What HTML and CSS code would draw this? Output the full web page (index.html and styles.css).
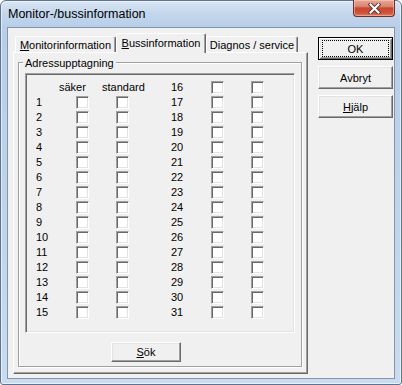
FILE: index.html
```html
<!DOCTYPE html>
<html lang="sv">

<head>
    <meta charset="UTF-8">
    <title>Monitor-/bussinformation</title>
    <link rel="stylesheet" href="styles.css">
</head>

<body>
    <div class="window">
        <div class="titlebar">
            <span class="title">Monitor-/bussinformation</span>
            <div class="close">
                <svg width="13" height="11" viewBox="0 0 13 11">
                    <path d="M2.5 1.5 L10.5 9.5 M10.5 1.5 L2.5 9.5" stroke="#5b3b36" stroke-width="4" stroke-linecap="square" fill="none"/>
                    <path d="M2.5 1.5 L10.5 9.5 M10.5 1.5 L2.5 9.5" stroke="#fff" stroke-width="2" stroke-linecap="square" fill="none"/>
                </svg>
            </div>
        </div>
        <div class="client">
            <div class="tabctl">
                <div class="tabstrip">
                    <div class="tab t1"><u>M</u>onitorinformation</div>
                    <div class="tab t2 active"><u>B</u>ussinformation</div>
                    <div class="tab t3">Diagnos / service</div>
                </div>
                <div class="panel">
                    <fieldset class="group">
                        <legend>Adressupptagning</legend>
                        <div class="sunken">
                            <div class="grid">
                                <span></span><span>säker</span><span>standard</span><span>16</span><span class="cb"></span><span class="cb"></span>
                                <span>1</span><span class="cb a"></span><span class="cb b"></span><span>17</span><span class="cb"></span><span class="cb"></span>
                                <span>2</span><span class="cb a"></span><span class="cb b"></span><span>18</span><span class="cb"></span><span class="cb"></span>
                                <span>3</span><span class="cb a"></span><span class="cb b"></span><span>19</span><span class="cb"></span><span class="cb"></span>
                                <span>4</span><span class="cb a"></span><span class="cb b"></span><span>20</span><span class="cb"></span><span class="cb"></span>
                                <span>5</span><span class="cb a"></span><span class="cb b"></span><span>21</span><span class="cb"></span><span class="cb"></span>
                                <span>6</span><span class="cb a"></span><span class="cb b"></span><span>22</span><span class="cb"></span><span class="cb"></span>
                                <span>7</span><span class="cb a"></span><span class="cb b"></span><span>23</span><span class="cb"></span><span class="cb"></span>
                                <span>8</span><span class="cb a"></span><span class="cb b"></span><span>24</span><span class="cb"></span><span class="cb"></span>
                                <span>9</span><span class="cb a"></span><span class="cb b"></span><span>25</span><span class="cb"></span><span class="cb"></span>
                                <span>10</span><span class="cb a"></span><span class="cb b"></span><span>26</span><span class="cb"></span><span class="cb"></span>
                                <span>11</span><span class="cb a"></span><span class="cb b"></span><span>27</span><span class="cb"></span><span class="cb"></span>
                                <span>12</span><span class="cb a"></span><span class="cb b"></span><span>28</span><span class="cb"></span><span class="cb"></span>
                                <span>13</span><span class="cb a"></span><span class="cb b"></span><span>29</span><span class="cb"></span><span class="cb"></span>
                                <span>14</span><span class="cb a"></span><span class="cb b"></span><span>30</span><span class="cb"></span><span class="cb"></span>
                                <span>15</span><span class="cb a"></span><span class="cb b"></span><span>31</span><span class="cb"></span><span class="cb"></span>
                            </div>
                        </div>
                        <div class="btn sok"><u>S</u>ök</div>
                    </fieldset>
                </div>
            </div>
            <div class="side">
                <div class="btn default"><span class="focus">OK</span></div>
                <div class="btn">Avbryt</div>
                <div class="btn"><u>H</u>jälp</div>
            </div>
        </div>
    </div>
</body>

</html>
```

FILE: styles.css
```css
* {
    margin: 0;
    padding: 0;
    box-sizing: border-box;
}

body {
    background: #fff;
    font-family: "Liberation Sans", Arial, sans-serif;
    font-size: 11px;
    color: #000;
}

/* fenster */
.window {
    width: 402px;
    height: 385px;
    display: flex;
    flex-direction: column;
    padding: 0 6px 5px 6px;
    border: 1px solid #5c7391;
    border-radius: 6px 6px 3px 3px;
    background: linear-gradient(to bottom, #d9e6f4 0, #c3d6ec 13px, #b8cee8 26px, #c0d5eb 60%, #c9dcef 100%);
    box-shadow: inset 0 0 0 1px rgba(255, 255, 255, 0.6);
}

.titlebar {
    height: 26px;
    display: flex;
    align-items: center;
}

.title {
    padding-left: 1px;
    font-size: 12.5px;
}

.close {
    margin-left: auto;
    align-self: flex-start;
    margin-top: -1px;
    width: 42px;
    height: 17px;
    display: flex;
    align-items: center;
    justify-content: center;
    border: 1px solid #6b3026;
    border-top: none;
    border-radius: 0 0 4px 4px;
    background: linear-gradient(to bottom, #e9a896 0, #d98670 40%, #c8462f 50%, #cf5338 80%, #dd7b5c 100%);
    box-shadow: inset 0 0 0 1px rgba(255, 220, 210, 0.45);
}

.client {
    flex: 1;
    display: flex;
    align-items: flex-start;
    padding: 5px 0 0 5px;
    background: #f0f0f0;
    border: 1px solid #8396ad;
}

/* flikar */
.tabctl {
    width: 295px;
}

.tabstrip {
    height: 19px;
    display: flex;
    align-items: flex-end;
    padding-left: 2px;
}

.tab {
    height: 16px;
    display: flex;
    align-items: center;
    justify-content: center;
    background: #f0f0f0;
    border: 1px solid #fff;
    border-bottom: none;
    border-right-color: #696969;
    border-radius: 2px 2px 0 0;
    box-shadow: inset -1px 0 0 #a0a0a0;
}

.t1 {
    width: 101px;
}

.t2 {
    width: 90px;
}

.t3 {
    width: 92px;
}

.tab.active {
    position: relative;
    z-index: 1;
    height: 20px;
    margin-bottom: -1px;
    padding-bottom: 1px;
}

.panel {
    width: 295px;
    height: 322px;
    padding: 2px 4px 0 4px;
    border: 1px solid;
    border-color: #fff #696969 #696969 #fff;
    box-shadow: inset -1px -1px 0 #a0a0a0;
}

/* gruppruta */
.group {
    width: 284px;
    padding: 3px 4px 4px 4px;
    border: 1px solid #a0a0a0;
    box-shadow: 1px 1px 0 #fff, inset 1px 1px 0 #fff;
}

.group legend {
    padding: 2px 2px 0;
    line-height: 13px;
    background: #f0f0f0;
}

.sunken {
    height: 260px;
    margin: 0 2px;
    padding: 6px 0 0 10px;
    border: 1px solid;
    border-color: #a0a0a0 #fff #fff #a0a0a0;
    box-shadow: inset 1px 1px 0 #696969, inset -1px -1px 0 #e3e3e3;
}

.grid {
    display: grid;
    grid-template-columns: 23px 43px 69px 40px 40px 13px;
    grid-auto-rows: 15px;
    align-items: center;
    line-height: 13px;
}

.cb {
    display: block;
    width: 13px;
    height: 13px;
    background: #fff;
    border: 1px solid;
    border-color: #a0a0a0 #fff #fff #a0a0a0;
    box-shadow: inset 1px 1px 0 #696969, inset -1px -1px 0 #e3e3e3;
}

.cb.a {
    margin-left: 17px;
}

.cb.b {
    margin-left: 14px;
}

/* knappar */
.btn {
    width: 75px;
    height: 23px;
    display: flex;
    align-items: center;
    justify-content: center;
    background: #f0f0f0;
    border: 1px solid;
    border-color: #fff #696969 #696969 #fff;
    box-shadow: inset -1px -1px 0 #a0a0a0, inset 1px 1px 0 #e3e3e3;
}

.btn.default {
    border-color: #000;
    box-shadow: inset 1px 1px 0 #fff, inset -1px -1px 0 #696969, inset 2px 2px 0 #e3e3e3, inset -2px -2px 0 #a0a0a0;
}

.focus {
    width: 67px;
    height: 17px;
    display: flex;
    align-items: center;
    justify-content: center;
    border: 1px dotted #000;
}

.sok {
    width: 70px;
    height: 20px;
    margin: 9px 0 0 88px;
}

.side {
    display: flex;
    flex-direction: column;
    gap: 6px;
    margin: 4px 0 0 10px;
}
```
